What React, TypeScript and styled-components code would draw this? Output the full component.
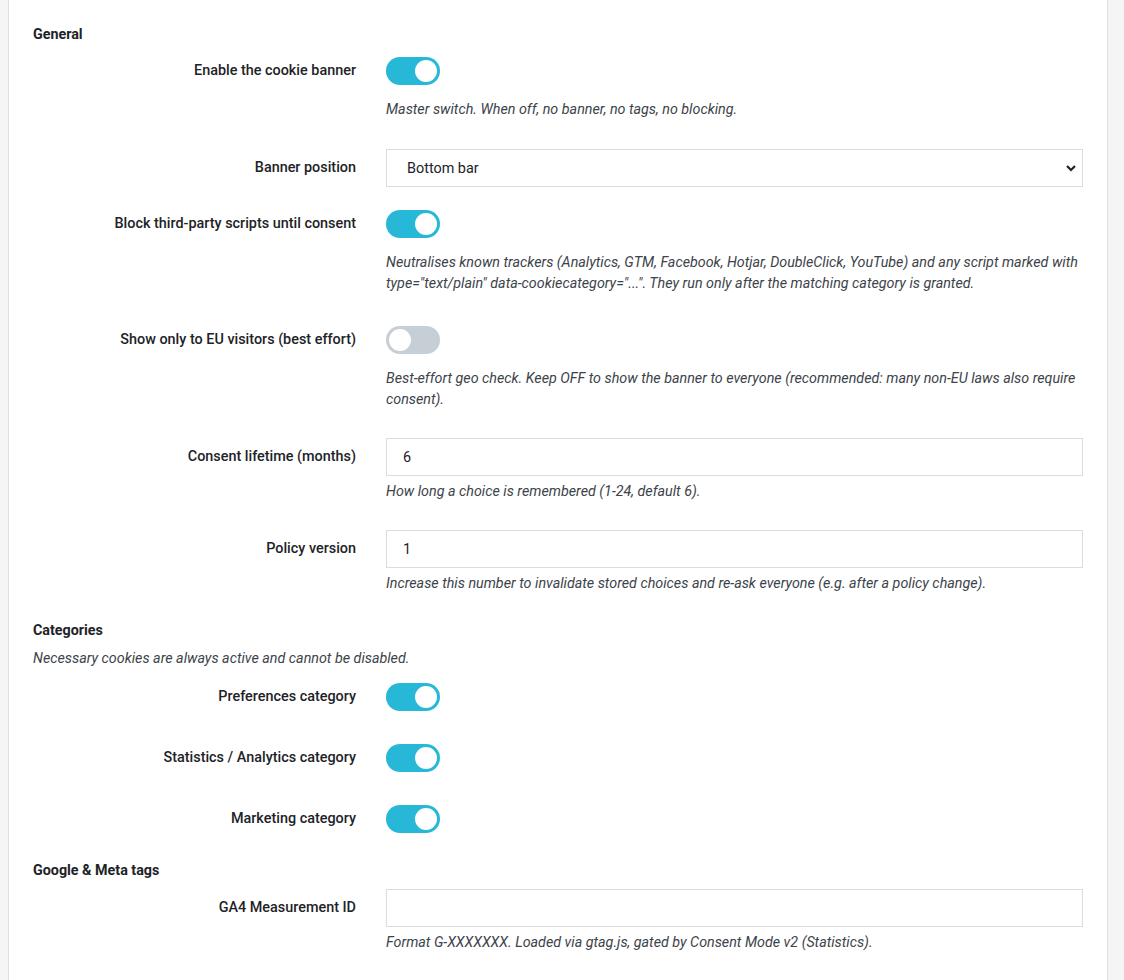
import React, { ReactElement, ReactNode } from 'react';
import styled, { createGlobalStyle } from 'styled-components';

const GlobalStyle = createGlobalStyle`
  html, body {
    margin: 0;
    padding: 0;
    background: #f5f5f5;
  }
  body {
    padding-left: 8px;
    font-family: Roboto, 'Liberation Sans', sans-serif;
    color: #1d2327;
  }
`;

const Card = styled.div`
  width: 1100px;
  box-sizing: border-box;
  min-height: 980px;
  background: #fff;
  border-left: 1px solid #e0e0e0;
  border-right: 1px solid #e0e0e0;
  padding: 24px 24px 0;
`;

const Heading = styled.h3<{ $top?: number; $bottom?: number }>`
  margin: ${(p) => p.$top ?? 0}px 0 ${(p) => p.$bottom ?? 0}px;
  font-size: 14.3px;
  line-height: 20px;
  font-weight: 700;
  color: #1d2327;
`;

const Note = styled.p<{ $gap?: number }>`
  margin: ${(p) => p.$gap ?? 0}px 0 0;
  font-size: 14.3px;
  line-height: 21px;
  font-style: italic;
  color: #3c434a;
`;

const Row = styled.div<{ $pt?: number; $pb?: number }>`
  display: grid;
  grid-template-columns: 323px 1fr;
  column-gap: 30px;
  padding: ${(p) => p.$pt ?? 14}px 0 ${(p) => p.$pb ?? 14}px;
`;

const Label = styled.label<{ $h: number }>`
  box-sizing: border-box;
  height: ${(p) => p.$h}px;
  padding-bottom: 2px;
  display: flex;
  align-items: center;
  justify-content: flex-end;
  font-size: 14.4px;
  font-weight: 500;
  color: #1d2327;
  text-align: right;
`;

const Control = styled.div`
  display: flex;
  flex-direction: column;
  align-items: flex-start;
`;

const Switch = styled.span<{ $on: boolean }>`
  position: relative;
  display: block;
  width: 54px;
  height: 28px;
  border-radius: 14px;
  background: ${(p) => (p.$on ? '#27b8d8' : '#c6ced6')};
  &::after {
    content: '';
    position: absolute;
    top: 3px;
    left: ${(p) => (p.$on ? '29px' : '3px')};
    width: 22px;
    height: 22px;
    border-radius: 50%;
    background: #fff;
  }
`;

const TextInput = styled.input`
  box-sizing: border-box;
  width: 100%;
  height: 38px;
  border: 1px solid #dcdcde;
  border-radius: 0;
  padding: 0 16px;
  font-family: inherit;
  font-size: 14.4px;
  color: #1d2327;
  background: #fff;
  outline: none;
`;

const SelectWrap = styled.div`
  position: relative;
  width: 100%;
  svg {
    position: absolute;
    right: 6px;
    top: 14px;
    pointer-events: none;
  }
`;

const Select = styled.select`
  box-sizing: border-box;
  width: 100%;
  height: 38px;
  border: 1px solid #dcdcde;
  border-radius: 0;
  padding: 0 20px;
  font-family: inherit;
  font-size: 14.4px;
  color: #1d2327;
  background: #fff;
  appearance: none;
  outline: none;
`;

type FieldProps = {
  label: string;
  h: number;
  pt?: number;
  pb?: number;
  children: ReactNode;
};

const Field = ({ label, h, pt, pb, children }: FieldProps): ReactElement => (
  <Row $pt={pt} $pb={pb}>
    <Label $h={h}>{label}</Label>
    <Control>{children}</Control>
  </Row>
);

const Chevron = () => (
  <svg width="12" height="10" viewBox="0 0 12 10">
    <path d="M2 3 L6 7 L10 3" fill="none" stroke="#1d2327" strokeWidth="2.2" />
  </svg>
);

export default function App(): ReactElement {
  return (
    <>
      <GlobalStyle />
      <Card>
        <Heading>General</Heading>

        <Field label="Enable the cookie banner" h={28} pt={13} pb={15}>
          <Switch $on />
          <Note $gap={14}>Master switch. When off, no banner, no tags, no blocking.</Note>
        </Field>

        <Field label="Banner position" h={38} pb={9}>
          <SelectWrap>
            <Select defaultValue="bottom">
              <option value="bottom">Bottom bar</option>
              <option value="top">Top bar</option>
              <option value="box">Box</option>
            </Select>
            <Chevron />
          </SelectWrap>
        </Field>

        <Field label="Block third-party scripts until consent" h={28} pb={18}>
          <Switch $on />
          <Note $gap={14}>
            Neutralises known trackers (Analytics, GTM, Facebook, Hotjar, DoubleClick, YouTube) and any script marked with
            <br />
            type="text/plain" data-cookiecategory="...". They run only after the matching category is granted.
          </Note>
        </Field>

        <Field label="Show only to EU visitors (best effort)" h={28} pb={14}>
          <Switch $on={false} />
          <Note $gap={14}>
            Best-effort geo check. Keep OFF to show the banner to everyone (recommended: many non-EU laws also require
            <br />
            consent).
          </Note>
        </Field>

        <Field label="Consent lifetime (months)" h={38}>
          <TextInput defaultValue="6" />
          <Note $gap={5}>How long a choice is remembered (1-24, default 6).</Note>
        </Field>

        <Field label="Policy version" h={38}>
          <TextInput defaultValue="1" />
          <Note $gap={5}>Increase this number to invalidate stored choices and re-ask everyone (e.g. after a policy change).</Note>
        </Field>

        <Heading $top={12} $bottom={8}>Categories</Heading>
        <Note>Necessary cookies are always active and cannot be disabled.</Note>

        <Field label="Preferences category" h={28} pb={19}>
          <Switch $on />
        </Field>
        <Field label="Statistics / Analytics category" h={28} pb={19}>
          <Switch $on />
        </Field>
        <Field label="Marketing category" h={28}>
          <Switch $on />
        </Field>

        <Heading $top={13}>Google &amp; Meta tags</Heading>

        <Field label="GA4 Measurement ID" h={38} pt={9}>
          <TextInput defaultValue="" />
          <Note $gap={5}>Format G-XXXXXXX. Loaded via gtag.js, gated by Consent Mode v2 (Statistics).</Note>
        </Field>
      </Card>
    </>
  );
}
